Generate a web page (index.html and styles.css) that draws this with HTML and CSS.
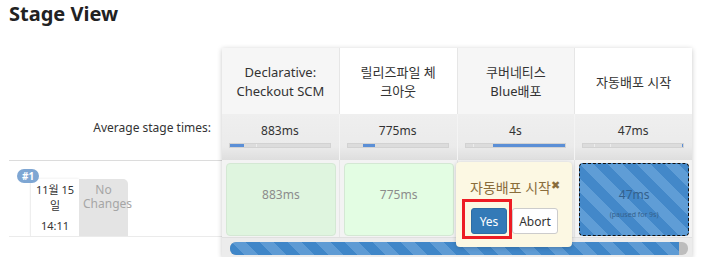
FILE: index.html
```html
<!DOCTYPE html>
<html lang="ko">
<head>
    <meta charset="UTF-8">
    <meta name="viewport" content="width=device-width, initial-scale=1.0">
    <title>Stage View</title>
    <link rel="stylesheet" href="styles.css">
</head>
<body>
    <h2 class="title">Stage View</h2>
    <div class="stage-view">
        <div class="labels">
            <div class="label-head"></div>
            <div class="label-avg">Average stage times:</div>
            <div class="build">
                <span class="badge">#1</span>
                <div class="build-info">
                    <div class="build-date">
                        <div class="date">11월 15일</div>
                        <div class="time">14:11</div>
                    </div>
                    <div class="changes">No Changes</div>
                </div>
            </div>
        </div>
        <div class="stages">
            <div class="row head">
                <div class="col">Declarative:<br>Checkout SCM</div>
                <div class="col">릴리즈파일 체<br>크아웃</div>
                <div class="col">쿠버네티스<br>Blue배포</div>
                <div class="col">자동배포 시작</div>
            </div>
            <div class="row avg">
                <div class="col">
                    <div class="avg-time">883ms</div>
                    <div class="bar"><span class="fill" style="margin-left: 0; width: 14%"></span><span class="mark" style="margin-left: 12%"></span></div>
                </div>
                <div class="col">
                    <div class="avg-time">775ms</div>
                    <div class="bar"><span class="fill" style="margin-left: 15%; width: 12%"></span></div>
                </div>
                <div class="col">
                    <div class="avg-time">4s</div>
                    <div class="bar"><span class="mark" style="margin-left: 8%"></span><span class="fill" style="margin-left: 19%; width: 73%"></span></div>
                </div>
                <div class="col">
                    <div class="avg-time">47ms</div>
                    <div class="bar"><span class="mark" style="margin-left: 11%"></span><span class="mark" style="margin-left: 15%"></span><span class="fill" style="margin-left: 72%; width: 1.5%"></span></div>
                </div>
            </div>
            <div class="row build-row">
                <div class="col"><div class="cell success dark">883ms</div></div>
                <div class="col"><div class="cell success">775ms</div></div>
                <div class="col"></div>
                <div class="col"><div class="cell paused">47ms<small>(paused for 9s)</small></div></div>
            </div>
            <div class="progress">
                <div class="progress-track"><div class="progress-fill"></div></div>
            </div>

            <div class="popover">
                <div class="popover-title">자동배포 시작<span class="close">&#10006;</span></div>
                <div class="popover-buttons">
                    <button class="btn btn-yes">Yes</button>
                    <button class="btn btn-abort">Abort</button>
                </div>
                <div class="highlight"></div>
            </div>
        </div>
    </div>
</body>
</html>
```

FILE: styles.css
```css
* {
    box-sizing: border-box;
}
body {
    margin: 0;
    font-family: "Noto Sans", "Noto Sans CJK KR", sans-serif;
    color: #333;
    background: #fff;
}
.title {
    margin: 0;
    padding: 1px 9px 0;
    font-size: 20px;
    line-height: 26px;
    font-weight: bold;
    color: #222;
}
.stage-view {
    display: flex;
    margin: 21px 0 0 9px;
}

/* left column */
.labels {
    width: 213px;
}
.label-head {
    height: 66px;
}
.label-avg {
    height: 46px;
    padding: 5px 11px 0 0;
    text-align: right;
    font-size: 12px;
    line-height: 18px;
}
.build {
    position: relative;
    height: 77px;
    border-top: 1px solid #dcdcdc;
    border-bottom: 1px solid #ebebeb;
}
.badge {
    position: absolute;
    left: 8px;
    top: 8px;
    padding: 0 5px;
    height: 14px;
    line-height: 14px;
    border-radius: 7px;
    background: #7ea6d3;
    color: #fff;
    font-size: 10px;
    font-weight: bold;
}
.build-info {
    display: flex;
    margin: 18px 0 0 21px;
    height: 57px;
}
.build-date {
    width: 49px;
    padding: 3px 2px 0;
    text-align: center;
    font-size: 11px;
    line-height: 16px;
    background: #fff;
    border-left: 1px solid #eee;
    box-shadow: 0 -1px 2px rgba(0, 0, 0, 0.05);
}
.time {
    margin-top: 4px;
}
.changes {
    width: 49px;
    padding: 4px 4px 0;
    text-align: center;
    font-size: 12px;
    line-height: 14px;
    color: #a6a6a6;
    background: #e4e4e4;
    border-radius: 0 5px 0 0;
}

/* stage columns */
.stages {
    position: relative;
    width: 470px;
    box-shadow: 0 1px 5px rgba(0, 0, 0, 0.22);
}
.row {
    display: flex;
}
.col {
    flex: 1;
    border-left: 1px solid #e6e6e6;
}
.col:first-child {
    border-left: none;
}
.head .col {
    height: 66px;
    display: flex;
    align-items: center;
    justify-content: center;
    padding: 2px 8px 0;
    text-align: center;
    font-size: 13px;
    line-height: 19px;
    background: #fff;
}
.head .col:nth-child(odd) {
    background: #f6f6f6;
}
.avg .col {
    height: 46px;
    padding: 7px 8px 0 7px;
    text-align: center;
    font-size: 12px;
    background: linear-gradient(#efefef, #ebebeb 70%, #dedede);
    border-left-color: #f4f4f4;
}
.avg-time {
    line-height: 20px;
}
.bar {
    display: flex;
    height: 5px;
    margin-top: 2px;
    background: #dcdcdc;
    border: 1px solid #d2d2d2;
}
.bar .fill {
    height: 100%;
    background: #5b8fd6;
}
.bar .mark {
    width: 1px;
    height: 100%;
    background: #ececec;
}
.build-row .col {
    height: 77px;
    padding: 3px 3px 1px 4px;
    background: #f3f3f3;
}
.cell {
    height: 100%;
    border-radius: 4px;
    padding-top: 22px;
    text-align: center;
    font-size: 12px;
    line-height: 18px;
    color: #8c8c8c;
}
.success {
    background: #e3fde3;
    border: 1px solid #d4e8d4;
}
.success.dark {
    background: #dff5df;
}
.paused {
    color: #33608c;
    border: 1px dashed #111;
    background: repeating-linear-gradient(45deg, #4388c9 0, #4388c9 10px, #5f9dd6 10px, #5f9dd6 20px);
}
.paused small {
    display: block;
    margin-top: 5px;
    font-size: 7px;
    line-height: 12px;
}
.progress {
    height: 20px;
    padding: 4px 4px 0 8px;
    background: #ececec;
    border-top: 1px solid #e0e0e0;
}
.progress-track {
    height: 13px;
    border-radius: 6px;
    background: #bdbdbd;
    overflow: hidden;
}
.progress-fill {
    width: 98%;
    height: 100%;
    background: repeating-linear-gradient(45deg, #3f86c8 0, #3f86c8 10px, #5e9bd4 10px, #5e9bd4 20px);
}

/* input popover */
.popover {
    position: absolute;
    left: 234px;
    top: 114px;
    width: 116px;
    height: 85px;
    background: #fcf8e3;
    border-radius: 4px;
    box-shadow: 0 1px 4px rgba(0, 0, 0, 0.2);
}
.popover-title {
    padding: 14px 0 0 14px;
    font-size: 14px;
    line-height: 19px;
    color: #8a6d3b;
    white-space: nowrap;
}
.close {
    font-family: "DejaVu Sans", sans-serif;
    font-size: 11px;
    font-weight: bold;
    vertical-align: 4px;
}
.popover-buttons {
    display: flex;
    gap: 5px;
    padding: 11px 0 0 15px;
}
.btn {
    height: 26px;
    padding: 0;
    font-family: "Noto Sans", sans-serif;
    font-size: 12px;
    border-radius: 3px;
    border: 1px solid;
}
.btn-yes {
    width: 36px;
    color: #fff;
    background: #337ab7;
    border-color: #2e6da4;
}
.btn-abort {
    width: 46px;
    color: #333;
    background: #fff;
    border-color: #ccc;
}
.highlight {
    position: absolute;
    left: 6px;
    top: 37px;
    width: 50px;
    height: 40px;
    border: 3px solid #ed1c24;
}
```
